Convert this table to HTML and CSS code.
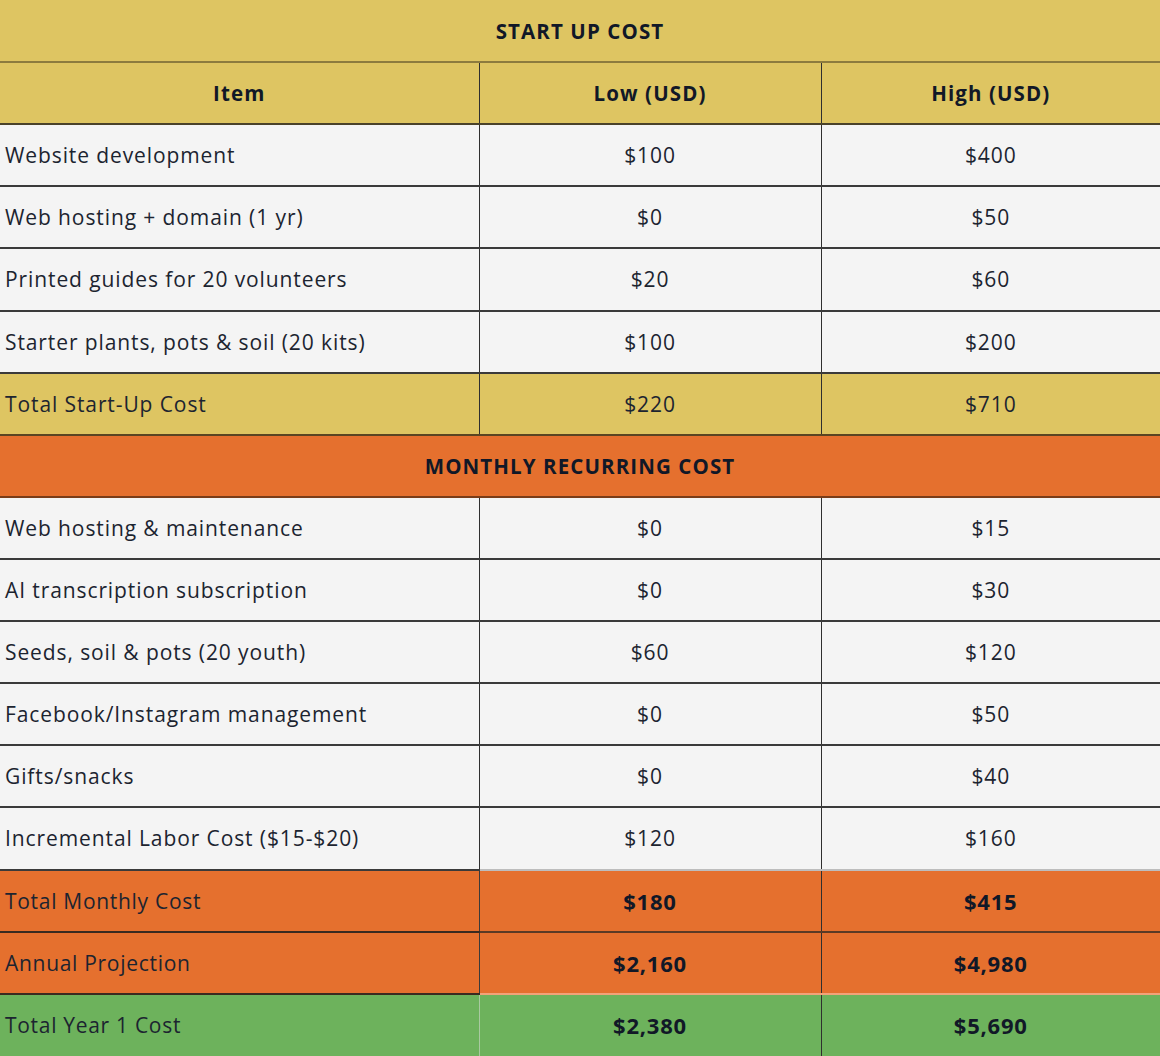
FILE: index.html
```html
<!DOCTYPE html>
<html lang="en">
<head>
<meta charset="utf-8">
<title>Cost Table</title>
<link rel="stylesheet" href="styles.css">
</head>
<body>
<table class="cost">
  <colgroup>
    <col class="c-item">
    <col class="c-low">
    <col class="c-high">
  </colgroup>
  <tr class="sec sec-yellow"><th colspan="3">START UP COST</th></tr>
  <tr class="head"><th>Item</th><th>Low (USD)</th><th>High (USD)</th></tr>
  <tr class="row"><td>Website development</td><td>$100</td><td>$400</td></tr>
  <tr class="row"><td>Web hosting + domain (1 yr)</td><td>$0</td><td>$50</td></tr>
  <tr class="row"><td>Printed guides for 20 volunteers</td><td>$20</td><td>$60</td></tr>
  <tr class="row"><td>Starter plants, pots &amp; soil (20 kits)</td><td>$100</td><td>$200</td></tr>
  <tr class="row total-yellow"><td>Total Start-Up Cost</td><td>$220</td><td>$710</td></tr>
  <tr class="sec sec-orange"><th colspan="3">MONTHLY RECURRING COST</th></tr>
  <tr class="row"><td>Web hosting &amp; maintenance</td><td>$0</td><td>$15</td></tr>
  <tr class="row"><td>AI transcription subscription</td><td>$0</td><td>$30</td></tr>
  <tr class="row"><td>Seeds, soil &amp; pots (20 youth)</td><td>$60</td><td>$120</td></tr>
  <tr class="row"><td>Facebook/Instagram management</td><td>$0</td><td>$50</td></tr>
  <tr class="row"><td>Gifts/snacks</td><td>$0</td><td>$40</td></tr>
  <tr class="row last-gray"><td>Incremental Labor Cost ($15-$20)</td><td>$120</td><td>$160</td></tr>
  <tr class="row sum sum-orange monthly"><td>Total Monthly Cost</td><td>$180</td><td>$415</td></tr>
  <tr class="row sum sum-orange annual"><td>Annual Projection</td><td>$2,160</td><td>$4,980</td></tr>
  <tr class="row sum sum-green"><td>Total Year 1 Cost</td><td>$2,380</td><td>$5,690</td></tr>
</table>
</body>
</html>
```
FILE: styles.css
```css
html, body {
  margin: 0;
  padding: 0;
  background: #ffffff;
}

.cost {
  width: 1160px;
  height: 1056px;
  border-collapse: collapse;
  table-layout: fixed;
  font-family: "Open Sans", "Noto Sans", sans-serif;
  color: #1c2430;
  font-size: 21px;
  letter-spacing: 0.9px;
}

.c-item { width: 479px; }
.c-low { width: 342px; }
.c-high { width: 339px; }

.cost tr { height: 62.1px; }

.cost th, .cost td {
  padding: 0;
  vertical-align: middle;
  text-align: center;
  border-bottom: 2px solid #3a3a3a;
}

.cost td + td, .cost th + th {
  border-left: 1.5px solid #2f2f2f;
}

.cost td:first-child {
  text-align: left;
  padding-left: 5px;
}

.cost th {
  font-weight: 700;
  font-size: 20.5px;
  letter-spacing: 1.1px;
  color: #111827;
}

.sec-yellow th {
  background: #dec562;
  border-bottom-color: #8c7b3e;
}

.head th {
  background: #dec562;
  border-bottom-color: #4a422a;
}

.row td {
  background: #f4f4f4;
}

.total-yellow td {
  background: #dec562;
  border-bottom-color: #5a4522;
}

.sec-orange th {
  background: #e5702e;
  border-bottom-color: #7a3c18;
}

.last-gray td + td {
  border-bottom-color: #bdbdbd;
}

.sum td {
  letter-spacing: 0.7px;
}

.sum td + td {
  font-weight: 700;
  font-size: 22px;
  letter-spacing: 0.8px;
  color: #111827;
}

.sum-orange td {
  background: #e5702e;
}

.sum-orange td:first-child {
  border-bottom-color: #3a2a20;
  border-right: 1.5px solid #3a3a3a;
}

.monthly td + td {
  border-bottom-color: #5b3a25;
}

.annual td + td {
  border-bottom-color: #f1a37a;
}

.sum-green td {
  background: #6db25c;
  border-bottom: 0;
}

.sum-green td:nth-child(2) {
  border-left-color: #a9c9a0;
}
```
